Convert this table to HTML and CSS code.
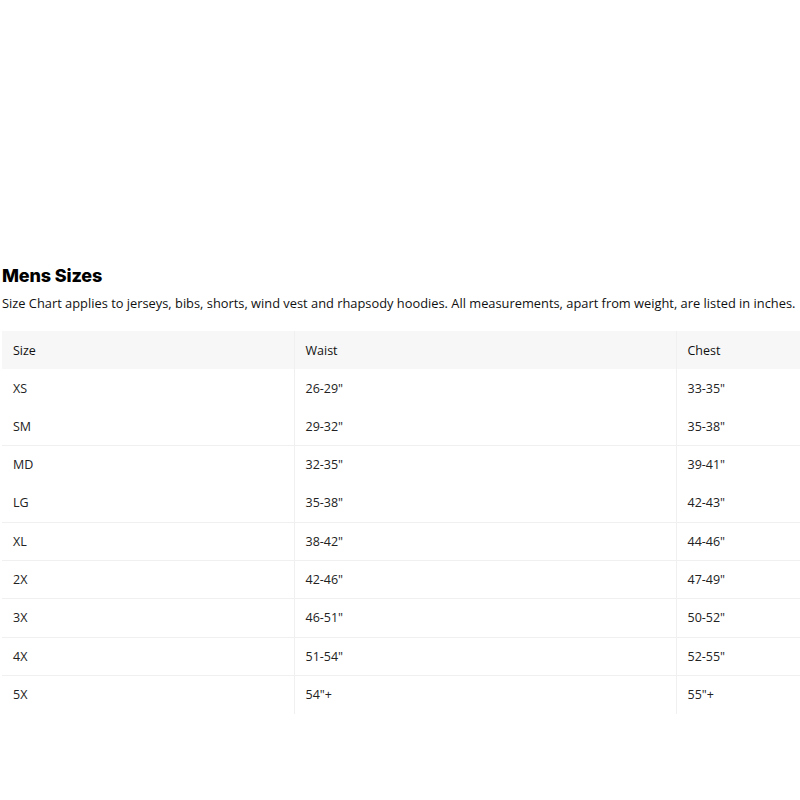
FILE: index.html
```html
<!DOCTYPE html>
<html lang="en">
<head>
<meta charset="utf-8">
<title>Mens Sizes</title>
<link rel="stylesheet" href="styles.css">
</head>
<body>
<main class="page">
  <h2 class="title">Mens Sizes</h2>
  <p class="note">Size Chart applies to jerseys, bibs, shorts, wind vest and rhapsody hoodies. All measurements, apart from weight, are listed in inches.</p>
  <div class="table-wrap">
    <table class="chart">
      <thead>
        <tr><th class="c1">Size</th><th class="c2">Waist</th><th class="c3">Chest</th></tr>
      </thead>
      <tbody>
        <tr><td>XS</td><td>26-29"</td><td>33-35"</td></tr>
        <tr class="line"><td>SM</td><td>29-32"</td><td>35-38"</td></tr>
        <tr><td>MD</td><td>32-35"</td><td>39-41"</td></tr>
        <tr class="line"><td>LG</td><td>35-38"</td><td>42-43"</td></tr>
        <tr class="line"><td>XL</td><td>38-42"</td><td>44-46"</td></tr>
        <tr class="line"><td>2X</td><td>42-46"</td><td>47-49"</td></tr>
        <tr class="line"><td>3X</td><td>46-51"</td><td>50-52"</td></tr>
        <tr class="line"><td>4X</td><td>51-54"</td><td>52-55"</td></tr>
        <tr><td>5X</td><td>54"+</td><td>55"+</td></tr>
      </tbody>
    </table>
  </div>
</main>
</body>
</html>
```

FILE: styles.css
```css
html, body {
  margin: 0;
  padding: 0;
  background: #fff;
}
body {
  font-family: "Open Sans", "Liberation Sans", sans-serif;
  color: #111;
  overflow: hidden;
}
.page {
  padding: 263px 0 0 2px;
}
.title {
  font-family: Inter, "Liberation Sans", sans-serif;
  font-weight: 800;
  font-size: 18px;
  line-height: 26px;
  margin: 0;
  color: #000;
  letter-spacing: -0.15px;
}
.note {
  margin: 5px 0 0;
  font-size: 12.85px;
  line-height: 18px;
  color: #111;
  white-space: nowrap;
}
.table-wrap {
  margin-top: 19px;
  width: 900px;
}
.chart {
  border-collapse: collapse;
  width: 900px;
  table-layout: fixed;
}
.chart th, .chart td {
  box-sizing: border-box;
  text-align: left;
  font-size: 12.5px;
  font-weight: 400;
  padding: 0 11px;
  height: 38.3px;
  color: #222;
}
.chart th {
  height: 38px;
  background: #f7f7f7;
  color: #111;
}
.chart td + td, .chart th + th {
  border-left: 1px solid #f0f0f0;
}
.c1 { width: 292px; }
.c2 { width: 382px; }
.chart tr.line td {
  border-bottom: 1px solid #f0f0f0;
}
```
